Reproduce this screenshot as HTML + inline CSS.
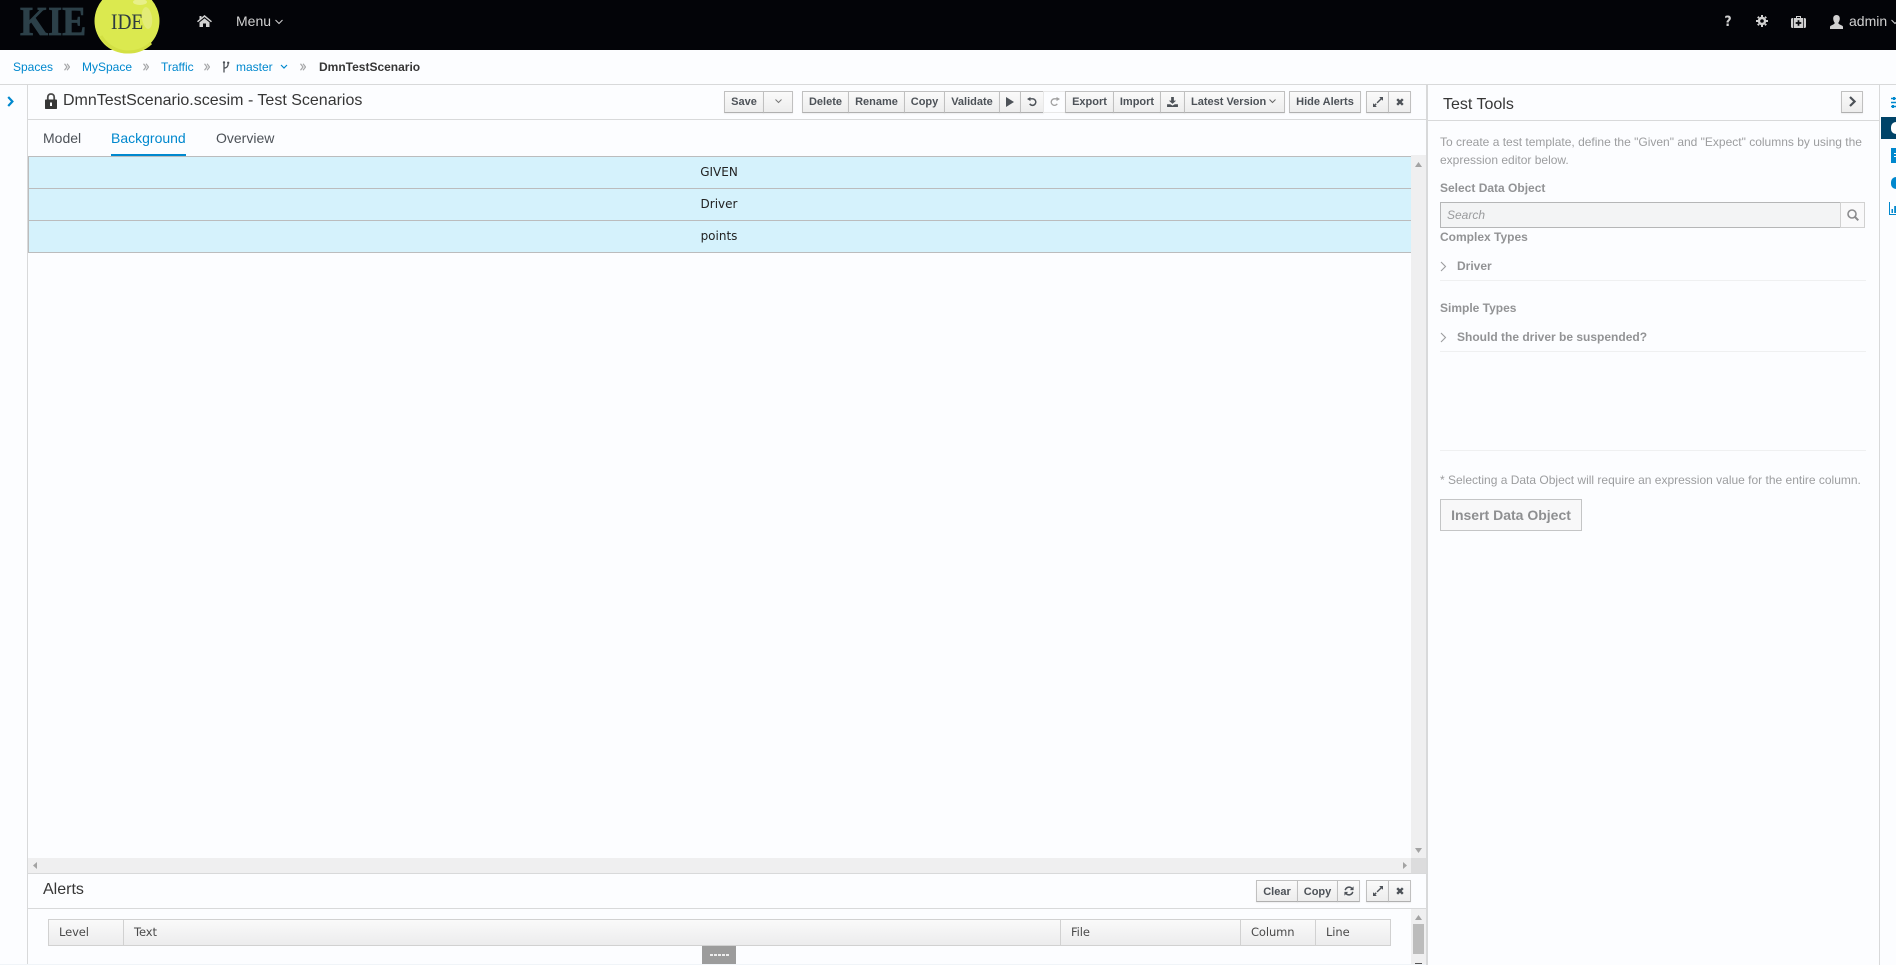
<!DOCTYPE html>
<html><head><meta charset="utf-8"><title>DmnTestScenario</title>
<style>
*{box-sizing:border-box}
html,body{margin:0;padding:0;width:1896px;height:965px;overflow:hidden;background:#fcfdff;font-family:"Liberation Sans",sans-serif;color:#363636}
.a{position:absolute;white-space:nowrap}
.l{position:absolute;background:#d8d9da}
.b{position:absolute;top:91px;height:22px;background:linear-gradient(#fafafa,#ededed);border:1px solid #c0c0c0;border-bottom-color:#b0b0b0;margin-right:-1px;box-shadow:0 1px 1px rgba(0,0,0,.06);font:bold 11px/21px "Liberation Sans",sans-serif;color:#4d5258;text-align:center}
.b svg{display:block;margin:5px auto 0}
.al{top:880px;line-height:22px}
.bc{font-size:12px;line-height:14px;top:60px;color:#0088ce}
.sep{top:62px}
.g{color:#9c9d9f;font-size:12px;line-height:14px}
.gb{color:#929395;font-size:12px;font-weight:bold;line-height:14px}
.cell{position:absolute;left:29px;width:1380px;text-align:center;font:12px/14px "DejaVu Sans",sans-serif;color:#222}
.th{position:absolute;top:925px;font:11.5px/14px "DejaVu Sans",sans-serif;color:#4a4a4a;letter-spacing:-.1px}
</style></head><body>

<!-- header -->
<div class="a" style="left:0;top:0;width:1896px;height:50px;background:#030408"></div>
<div class="a" style="left:20px;top:0;font:bold 41px/43px 'Liberation Serif',serif;color:#2c4049;-webkit-text-stroke:.8px #2c4049;transform:scaleX(.88);transform-origin:left">KIE</div>
<svg class="a" style="left:93px;top:0;overflow:visible" width="68" height="56" viewBox="0 0 68 56"><circle cx="34" cy="21" r="32.5" fill="#dbe94f"/><ellipse cx="54" cy="18" rx="5" ry="11" fill="#e3ec77" transform="rotate(-8 54 18)"/><ellipse cx="47" cy="2" rx="7" ry="3" fill="#e8f08a"/><path d="M8 36 A32 32 0 0 0 58 43" fill="none" stroke="#d3e044" stroke-width="3"/></svg>
<div class="a" style="left:111px;top:10px;font:22px/24px 'Liberation Serif',serif;color:#2e3b40;transform:scaleX(.88);transform-origin:left">IDE</div>
<svg class="a" style="left:197px;top:15px" width="15" height="12" viewBox="0 0 15 12"><path d="M7.5 0 L15 6.2 L14 7.2 L7.5 2 L1 7.2 L0 6.2 L2.5 4.1 V1 H4.5 V2.5 Z M2.5 7.4 L7.5 3.4 L12.5 7.4 V12 H9 V8.5 H6 V12 H2.5 Z" fill="#d1d1d1"/></svg>
<div class="a" style="left:236px;top:13px;font-size:14px;line-height:16px;color:#d1d1d1">Menu</div>
<svg class="a" style="left:275px;top:19px" width="8" height="6"><path d="M.5 1 L4 4.5 L7.5 1" fill="none" stroke="#d1d1d1"/></svg>
<div class="a" style="left:1724px;top:14px;font:bold 14px/16px 'DejaVu Sans',sans-serif;color:#d1d1d1;transform:scaleX(.9)">?</div>
<svg class="a" style="left:1756px;top:15px" width="12" height="12" viewBox="0 0 12 12"><path d="M6 0V2M6 10V12M0 6H2M10 6H12M1.8 1.8L3 3M9 9L10.2 10.2M10.2 1.8L9 3M3 9L1.8 10.2" stroke="#d1d1d1" stroke-width="2"/><circle cx="6" cy="6" r="3" fill="none" stroke="#d1d1d1" stroke-width="2.4"/></svg>
<svg class="a" style="left:1791px;top:15px" width="15" height="13" viewBox="0 0 15 13"><path d="M1.5 3H5V1H10V3H13.5Q15 3 15 4.5V11.5Q15 13 13.5 13H1.5Q0 13 0 11.5V4.5Q0 3 1.5 3ZM6 3H9V2H6Z" fill="#d1d1d1" fill-rule="evenodd"/><path d="M7.5 5.2V10.8M4.7 8H10.3" stroke="#030408" stroke-width="1.7"/><path d="M2.5 3V13M12.5 3V13" stroke="#030408" stroke-width=".7"/></svg>
<svg class="a" style="left:1830px;top:15px" width="13" height="14" viewBox="0 0 13 14"><path d="M6.5 0C8.6 0 9.8 1.5 9.8 3.6C9.8 5.5 8.9 7 8.3 7.8C8.2 8.8 9 9.2 10.5 9.9C12 10.5 13 11 13 12V14H0V12C0 11 1 10.5 2.5 9.9C4 9.2 4.8 8.8 4.7 7.8C4.1 7 3.2 5.5 3.2 3.6C3.2 1.5 4.4 0 6.5 0Z" fill="#d1d1d1"/></svg>
<div class="a" style="left:1849px;top:13px;font-size:14px;line-height:16px;color:#d1d1d1">admin</div>
<svg class="a" style="left:1891px;top:19px" width="8" height="6"><path d="M.5 1 L4 4.5 L7.5 1" fill="none" stroke="#d1d1d1"/></svg>

<!-- breadcrumb -->
<div class="a bc" style="left:13px">Spaces</div>
<svg class="a sep" style="left:64px;top:63px" width="6" height="8" viewBox="0 0 6 8"><path d="M.5 .8L3 4 .5 7.2M3 .8L5.5 4 3 7.2" fill="none" stroke="#a5a6a8" stroke-width="1.2"/></svg>
<div class="a bc" style="left:82px">MySpace</div>
<svg class="a sep" style="left:143px;top:63px" width="6" height="8" viewBox="0 0 6 8"><path d="M.5 .8L3 4 .5 7.2M3 .8L5.5 4 3 7.2" fill="none" stroke="#a5a6a8" stroke-width="1.2"/></svg>
<div class="a bc" style="left:161px">Traffic</div>
<svg class="a sep" style="left:204px;top:63px" width="6" height="8" viewBox="0 0 6 8"><path d="M.5 .8L3 4 .5 7.2M3 .8L5.5 4 3 7.2" fill="none" stroke="#a5a6a8" stroke-width="1.2"/></svg>
<svg class="a" style="left:222px;top:61px" width="8" height="12" viewBox="0 0 8 12"><path d="M2 1V11.5M2 7C5 7 6.2 5 6.2 2.5" fill="none" stroke="#4d5258" stroke-width="1.3"/><circle cx="2" cy="1.4" r="1.2" fill="#4d5258"/><circle cx="6.2" cy="1.8" r="1.2" fill="#4d5258"/></svg>
<div class="a bc" style="left:236px">master</div>
<svg class="a" style="left:280px;top:64px" width="8" height="6"><path d="M1 1 L4 4 L7 1" fill="none" stroke="#0088ce" stroke-width="1.2"/></svg>
<svg class="a sep" style="left:300px;top:63px" width="6" height="8" viewBox="0 0 6 8"><path d="M.5 .8L3 4 .5 7.2M3 .8L5.5 4 3 7.2" fill="none" stroke="#a5a6a8" stroke-width="1.2"/></svg>
<div class="a" style="left:319px;top:60px;font-size:12px;line-height:14px;font-weight:bold;color:#363636">DmnTestScenario</div>

<!-- structural lines -->
<div class="l" style="left:0;top:84px;width:1896px;height:1px"></div>
<div class="l" style="left:27px;top:85px;width:1px;height:880px"></div>
<div class="l" style="left:28px;top:119px;width:1398px;height:1px"></div>
<div class="l" style="left:1426px;top:85px;width:2px;height:880px"></div>
<div class="l" style="left:1428px;top:120px;width:451px;height:1px"></div>
<div class="l" style="left:1879px;top:85px;width:1px;height:880px"></div>

<!-- left side -->
<svg class="a" style="left:7px;top:96px" width="7" height="11" viewBox="0 0 7 11"><path d="M1.2 1 L5.4 5.5 L1.2 10" fill="none" stroke="#0088ce" stroke-width="2.2"/></svg>

<!-- title -->
<svg class="a" style="left:45px;top:93px" width="12" height="16" viewBox="0 0 12 16"><path d="M2.8 7V4.2C2.8 2.2 4 1 6 1S9.2 2.2 9.2 4.2V7" fill="none" stroke="#4a4a4a" stroke-width="1.8"/><rect x="0" y="6.5" width="12" height="9.5" rx=".8" fill="#363636"/><rect x="5" y="9.5" width="2" height="3.5" fill="#fcfdff"/></svg>
<div class="a" style="left:63px;top:92px;font-size:16px;line-height:18px;color:#363636">DmnTestScenario.scesim - Test Scenarios</div>

<!-- toolbar -->
<div class="b" style="left:724px;width:40px">Save</div>
<div class="b" style="left:763px;width:30px"><svg width="7" height="5" style="margin-top:7px"><path d="M.5 .5 L3.5 3.5 L6.5 .5" fill="none" stroke="#777"/></svg></div>
<div class="b" style="left:802px;width:47px">Delete</div>
<div class="b" style="left:848px;width:57px">Rename</div>
<div class="b" style="left:904px;width:41px">Copy</div>
<div class="b" style="left:944px;width:56px">Validate</div>
<div class="b" style="left:999px;width:22px"><svg width="8" height="10" viewBox="0 0 8 10"><path d="M0 0 L8 5 L0 10Z" fill="#4d5258"/></svg></div>
<div class="b" style="left:1020px;width:24px"><svg width="10" height="10" viewBox="0 0 11 11"><path d="M3 2H6.5A3.6 3.6 0 1 1 3 7.5" fill="none" stroke="#4d5258" stroke-width="1.6"/><path d="M0 2.2 L3.8 0 V4.5Z" fill="#4d5258"/></svg></div>
<div class="b" style="left:1043px;width:23px;background:#fcfdff;border-color:#e8e8e8;box-shadow:none"><svg width="10" height="10" viewBox="0 0 11 11"><path d="M8 2H4.5A3.6 3.6 0 1 0 8 7.5" fill="none" stroke="#a0a0a0" stroke-width="1.4"/><path d="M11 2.2 L7.2 0 V4.5Z" fill="#a0a0a0"/></svg></div>
<div class="b" style="left:1065px;width:49px">Export</div>
<div class="b" style="left:1113px;width:48px">Import</div>
<div class="b" style="left:1160px;width:25px"><svg width="11" height="10" viewBox="0 0 12 11"><path d="M4.5 0H7.5V4H10L6 7.5 2 4H4.5Z" fill="#4d5258"/><path d="M0 8H3.5L6 9.5 8.5 8H12V11H0Z" fill="#4d5258"/></svg></div>
<div class="b" style="left:1184px;width:101px;text-align:left;padding-left:6px">Latest Version<svg width="7" height="5" style="display:inline-block;margin:0 0 1px 3px"><path d="M.5 .5 L3.5 3.5 L6.5 .5" fill="none" stroke="#666"/></svg></div>
<div class="b" style="left:1289px;width:72px">Hide Alerts</div>
<div class="b" style="left:1366px;width:23px"><svg width="10" height="10" viewBox="0 0 12 12"><path d="M7.5 0H12V4.5L10.2 3 5.5 7.7 4.3 6.5 9 1.8ZM4.5 12H0V7.5L1.8 9 3.3 7.5 4.5 8.7 3 10.2Z" fill="#4d5258"/></svg></div>
<div class="b" style="left:1388px;width:23px"><svg width="8" height="8" viewBox="0 0 10 10" style="margin-top:6px"><path d="M1.5 1.5L8.5 8.5M8.5 1.5L1.5 8.5" stroke="#4d5258" stroke-width="3"/></svg></div>

<!-- tabs -->
<div class="a" style="left:43px;top:130px;font-size:14px;line-height:16px;color:#4d5258">Model</div>
<div class="a" style="left:111px;top:130px;font-size:14px;line-height:16px;color:#0088ce">Background</div>
<div class="a" style="left:111px;top:154px;width:75px;height:2px;background:#0088ce"></div>
<div class="a" style="left:216px;top:130px;font-size:14px;line-height:16px;color:#4d5258">Overview</div>

<!-- grid -->
<div class="a" style="left:28px;top:156px;width:1383px;height:97px;background:#d5f2fc;border:1px solid #bbbcbd;border-right:0"></div>
<div class="a" style="left:28px;top:188px;width:1383px;height:1px;background:#bbbcbd"></div>
<div class="a" style="left:28px;top:220px;width:1383px;height:1px;background:#bbbcbd"></div>
<div class="cell" style="top:165px">GIVEN</div>
<div class="cell" style="top:197px">Driver</div>
<div class="cell" style="top:229px">points</div>

<!-- scrollbars -->
<div class="a" style="left:1411px;top:155px;width:15px;height:703px;background:#efeff0"></div>
<svg class="a" style="left:1415px;top:162px" width="7" height="5"><path d="M3.5 0 L7 5H0Z" fill="#a3a3a3"/></svg>
<svg class="a" style="left:1415px;top:848px" width="7" height="5"><path d="M3.5 5 L7 0H0Z" fill="#a3a3a3"/></svg>
<div class="a" style="left:28px;top:858px;width:1383px;height:15px;background:#efeff0"></div>
<div class="a" style="left:1411px;top:858px;width:15px;height:15px;background:#dcdcdd"></div>
<svg class="a" style="left:33px;top:862px" width="5" height="7"><path d="M4 0V7L0 3.5Z" fill="#a3a3a3"/></svg>
<svg class="a" style="left:1403px;top:862px" width="5" height="7"><path d="M0 0V7L4 3.5Z" fill="#a3a3a3"/></svg>

<!-- alerts -->
<div class="l" style="left:28px;top:873px;width:1398px;height:1px"></div>
<div class="l" style="left:28px;top:908px;width:1398px;height:1px"></div>
<div class="a" style="left:43px;top:881px;font-size:16px;line-height:18px;color:#363636">Alerts</div>
<div class="b al" style="left:1256px;width:42px">Clear</div>
<div class="b al" style="left:1297px;width:41px">Copy</div>
<div class="b al" style="left:1337px;width:23px"><svg width="10" height="10" viewBox="0 0 12 12"><path d="M1.5 5A4.6 4.6 0 0 1 9.5 3M10.5 7A4.6 4.6 0 0 1 2.5 9" fill="none" stroke="#4d5258" stroke-width="1.8"/><path d="M11.5 0.5V5H7ZM.5 11.5V7H5Z" fill="#4d5258"/></svg></div>
<div class="b al" style="left:1366px;width:23px"><svg width="10" height="10" viewBox="0 0 12 12"><path d="M7.5 0H12V4.5L10.2 3 5.5 7.7 4.3 6.5 9 1.8ZM4.5 12H0V7.5L1.8 9 3.3 7.5 4.5 8.7 3 10.2Z" fill="#4d5258"/></svg></div>
<div class="b al" style="left:1388px;width:23px"><svg width="8" height="8" viewBox="0 0 10 10" style="margin-top:6px"><path d="M1.5 1.5L8.5 8.5M8.5 1.5L1.5 8.5" stroke="#4d5258" stroke-width="3"/></svg></div>

<div class="a" style="left:48px;top:919px;width:1343px;height:27px;background:linear-gradient(#fafafa,#ececed);border:1px solid #d1d1d1"></div>
<div class="l" style="left:123px;top:919px;width:1px;height:27px;background:#d1d1d1"></div>
<div class="l" style="left:1060px;top:919px;width:1px;height:27px;background:#d1d1d1"></div>
<div class="l" style="left:1240px;top:919px;width:1px;height:27px;background:#d1d1d1"></div>
<div class="l" style="left:1315px;top:919px;width:1px;height:27px;background:#d1d1d1"></div>
<div class="th" style="left:59px">Level</div>
<div class="th" style="left:134px">Text</div>
<div class="th" style="left:1071px">File</div>
<div class="th" style="left:1251px">Column</div>
<div class="th" style="left:1326px">Line</div>
<div class="a" style="left:702px;top:946px;width:34px;height:19px;background:#9c9c9c"></div>
<div class="a" style="left:710px;top:954px;width:19px;height:2px;background:repeating-linear-gradient(90deg,#eee 0 3px,transparent 3px 4px)"></div>

<div class="a" style="left:1411px;top:909px;width:15px;height:56px;background:#efeff0"></div>
<svg class="a" style="left:1415px;top:915px" width="7" height="5"><path d="M3.5 0 L7 5H0Z" fill="#a3a3a3"/></svg>
<div class="a" style="left:1413px;top:924px;width:11px;height:30px;background:#bcbcbc"></div>
<div class="a" style="left:1415px;top:963px;width:7px;height:2px;background:#555"></div>
<div class="a" style="left:0;top:964px;width:1426px;height:1px;background:#f0f4f8"></div>

<!-- test tools -->
<div class="a" style="left:1443px;top:93px;font-size:16px;line-height:20px;color:#363636;margin-top:2px">Test Tools</div>
<div class="b" style="left:1841px;top:91px;width:22px;height:22px"><svg width="9" height="11" viewBox="0 0 9 11" style="margin-top:4px"><path d="M2 1 L6.6 5.5 L2 10" fill="none" stroke="#4d5258" stroke-width="2.2"/></svg></div>
<div class="a g" style="left:1440px;top:135px">To create a test template, define the "Given" and "Expect" columns by using the</div>
<div class="a g" style="left:1440px;top:153px">expression editor below.</div>
<div class="a gb" style="left:1440px;top:181px">Select Data Object</div>
<div class="a" style="left:1440px;top:202px;width:401px;height:26px;background:#f3f4f5;border:1px solid #b5b6b7"></div>
<div class="a" style="left:1840px;top:202px;width:25px;height:26px;background:#f9f9fa;border:1px solid #d1d1d1"></div>
<div class="a" style="left:1447px;top:208px;font-size:12px;font-style:italic;line-height:14px;color:#9a9b9d">Search</div>
<svg class="a" style="left:1847px;top:209px" width="12" height="12" viewBox="0 0 12 12"><circle cx="5" cy="5" r="4" fill="none" stroke="#8a8b8d" stroke-width="1.6"/><path d="M8 8L11.3 11.3" stroke="#8a8b8d" stroke-width="2"/></svg>
<div class="a gb" style="left:1440px;top:230px">Complex Types</div>
<svg class="a" style="left:1440px;top:261px" width="7" height="11"><path d="M1 1 L5.5 5.5 L1 10" fill="none" stroke="#9c9d9f" stroke-width="1.1"/></svg>
<div class="a gb" style="left:1457px;top:259px">Driver</div>
<div class="a" style="left:1440px;top:280px;width:426px;height:1px;background:#eff0f1"></div>
<div class="a gb" style="left:1440px;top:301px">Simple Types</div>
<svg class="a" style="left:1440px;top:332px" width="7" height="11"><path d="M1 1 L5.5 5.5 L1 10" fill="none" stroke="#9c9d9f" stroke-width="1.1"/></svg>
<div class="a gb" style="left:1457px;top:330px">Should the driver be suspended?</div>
<div class="a" style="left:1440px;top:351px;width:426px;height:1px;background:#eff0f1"></div>
<div class="a" style="left:1440px;top:450px;width:426px;height:1px;background:#eff0f1"></div>
<div class="a g" style="left:1440px;top:473px">* Selecting a Data Object will require an expression value for the entire column.</div>
<div class="a" style="left:1440px;top:499px;width:142px;height:32px;background:#f8f8f9;border:1px solid #c4c5c6;font:bold 14px/30px 'Liberation Sans',sans-serif;color:#8e8f91;text-align:center">Insert Data Object</div>

<!-- right rail -->
<svg class="a" style="left:1890px;top:96px" width="6" height="13" viewBox="0 0 6 13"><path d="M1 2.5H6M1 6.5H6M1 10.5H6" stroke="#0088ce" stroke-width="1.5"/><rect x="3" y="1" width="2" height="3" fill="#0088ce"/><rect x="2" y="9" width="2" height="3" fill="#0088ce"/></svg>
<div class="a" style="left:1881px;top:117px;width:15px;height:22px;background:#004368"></div>
<div class="a" style="left:1891px;top:122px;width:5px;height:12px;background:#fff;border-radius:6px 0 0 6px"></div>
<div class="a" style="left:1891px;top:148px;width:5px;height:15px;background:#0088ce"></div>
<div class="a" style="left:1894px;top:153px;width:2px;height:1px;background:#fff"></div>
<div class="a" style="left:1894px;top:156px;width:2px;height:1px;background:#fff"></div>
<div class="a" style="left:1891px;top:177px;width:5px;height:12px;background:#0088ce;border-radius:6px 0 0 6px"></div>
<svg class="a" style="left:1889px;top:202px" width="7" height="13" viewBox="0 0 7 13"><path d="M.5 0V12.5H7" fill="none" stroke="#0088ce"/><rect x="2.5" y="7" width="1.5" height="4" fill="#0088ce"/><rect x="5.2" y="4" width="1.8" height="7" fill="#0088ce"/></svg>
</body></html>
